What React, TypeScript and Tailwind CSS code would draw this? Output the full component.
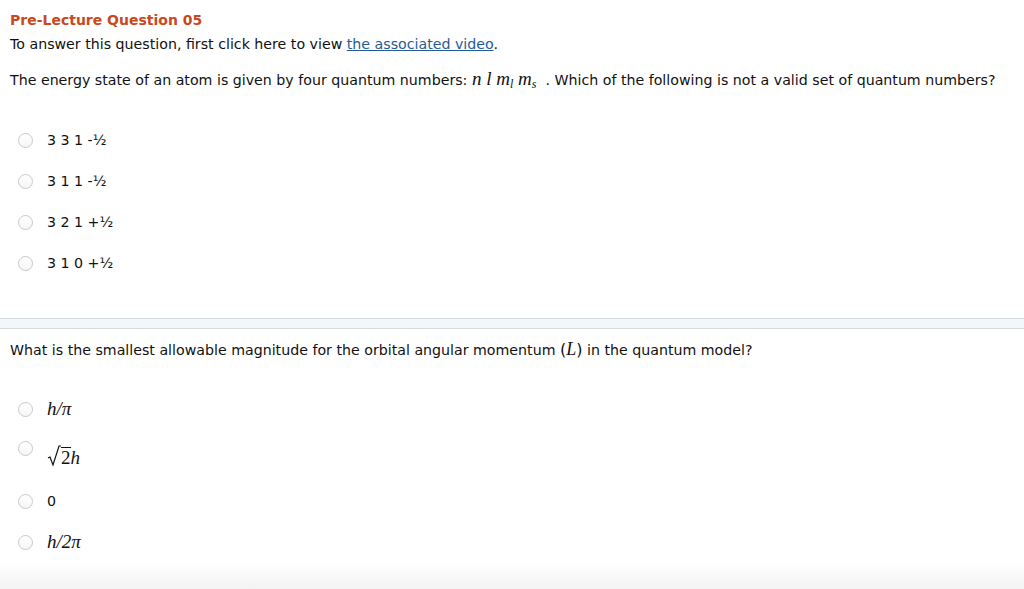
import React from 'react';

const sans = "font-['Verdana','DejaVu_Sans',sans-serif]";
const serif = "font-['Liberation_Serif','Times_New_Roman',serif] italic";

function Radio({ className = '' }: { className?: string }) {
    return (
        <span className={`inline-block w-[15px] h-[15px] rounded-full border border-[#c9c9c9] bg-gradient-to-b from-white to-[#f6f6f6] shrink-0 ${className}`} />
    );
}

function Option({ children }: { children: React.ReactNode }) {
    return (
        <div className="flex items-center h-[41px] pl-[18px]">
            <Radio />
            <div className="ml-[14px] text-[#111]">{children}</div>
        </div>
    );
}

const firstAnswers = ['3 3 1 -½', '3 1 1 -½', '3 2 1 +½', '3 1 0 +½'];

export default function App() {
    return (
        <div className={`${sans} bg-white w-[1024px] h-[589px] overflow-hidden flex flex-col text-[14.2px] text-[#111]`}>
            <div className="px-[10px] pt-[11px]">
                <h2 className="font-bold text-[14px] text-[#c8491d] leading-[18px]">Pre-Lecture Question 05</h2>
                <p className="mt-[7px] leading-[17px]">
                    To answer this question, first click here to view{' '}
                    <a href="#" className="text-[#245d96] underline">the associated video</a>.
                </p>
                <p className="mt-[16px] leading-[20px] flex items-baseline whitespace-nowrap">
                    <span>The energy state of an atom is given by four quantum numbers:&nbsp;</span>
                    <span className={`${serif} text-[19px]`}>
                        n l m<sub className="text-[12px]">l</sub> m<sub className="text-[12px]">s</sub>
                    </span>
                    <span>&nbsp; . Which of the following is not a valid set of quantum numbers?</span>
                </p>
            </div>

            <div className="mt-[30px]">
                {firstAnswers.map(a => (
                    <Option key={a}>{a}</Option>
                ))}
            </div>

            <div className="mt-[34px] h-[11px] border-t border-b border-[#d3dae0] bg-[#f3f7fa]" />

            <div className="px-[10px] pt-[10px]">
                <p className="leading-[20px] flex items-baseline whitespace-nowrap">
                    <span>What is the smallest allowable magnitude for the orbital angular momentum&nbsp;</span>
                    <span className="text-[16px]">(</span>
                    <span className={`${serif} text-[18px]`}>L</span>
                    <span className="text-[16px]">)</span>
                    <span>&nbsp;in the quantum model?</span>
                </p>
            </div>

            <div className="mt-[29px]">
                <Option>
                    <span className={`${serif} text-[19px]`}>h/π</span>
                </Option>
                <div className="flex items-start pl-[18px] h-[51px]">
                    <Radio className="mt-[11px]" />
                    <div className={`ml-[14px] mt-[15px] flex items-end ${serif} text-[19px]`}>
                        <svg width="14" height="22" viewBox="0 0 14 22">
                            <path d="M1 13 L3 12 L6 20 L12 1 L14 1" fill="none" stroke="#111" strokeWidth="1.2" />
                        </svg>
                        <span className="border-t border-[#111] leading-[19px] not-italic">2</span>
                        <span className="leading-[19px]">h</span>
                    </div>
                </div>
                <Option>0</Option>
                <Option>
                    <span className={`${serif} text-[19px]`}>h/2π</span>
                </Option>
            </div>

            <div className="flex-1 bg-gradient-to-b from-white to-[#f3f3f3]" />
        </div>
    );
}
